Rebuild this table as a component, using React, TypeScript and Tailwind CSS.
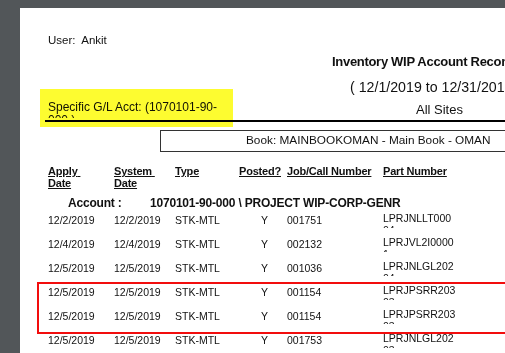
const rows = [
  { apply: "12/2/2019", system: "12/2/2019", job: "001751", part: "LPRJNLLT000", part2: "04" },
  { apply: "12/4/2019", system: "12/4/2019", job: "002132", part: "LPRJVL2I0000", part2: "1" },
  { apply: "12/5/2019", system: "12/5/2019", job: "001036", part: "LPRJNLGL202", part2: "04" },
  { apply: "12/5/2019", system: "12/5/2019", job: "001154", part: "LPRJPSRR203", part2: "03" },
  { apply: "12/5/2019", system: "12/5/2019", job: "001154", part: "LPRJPSRR203", part2: "03" },
  { apply: "12/5/2019", system: "12/5/2019", job: "001753", part: "LPRJNLGL202", part2: "03" },
];

const GRID = "grid grid-cols-[66px_61px_64px_48px_96px_auto] pl-[28px]";

export default function App() {
  return (
    <div className="relative h-[353px] w-[505px] overflow-hidden bg-[#525659] pl-[20px] pt-[8px] font-['Liberation_Sans',Arial,sans-serif] text-[#111]">
      <div className="h-[420px] w-[620px] bg-white">
        {/* User */}
        <div className="pl-[28px] pt-[25px] text-[11.5px] leading-[14px] whitespace-pre">User:  Ankit</div>

        {/* Report header */}
        <div className="ml-[25px] flex h-[73px]">
          <div className="flex w-[255px] flex-col justify-end pb-[2px] pl-[3px]">
            <div className="h-[17px] overflow-hidden text-[12px] leading-[13px] whitespace-nowrap">
              Specific G/L Acct: (1070101-90-
              <br />
              000 )
            </div>
          </div>
          <div className="flex flex-col whitespace-nowrap">
            <div className="ml-[32px] mt-[7px] text-[13px] font-bold leading-[16px] tracking-[-0.3px]">
              Inventory WIP Account Reconciliation
            </div>
            <div className="ml-[50px] mt-[9px] text-[14.2px] leading-[16px]">( 12/1/2019 to 12/31/2019 )</div>
            <div className="ml-[116px] mt-[7px] text-[13px] leading-[16px]">All Sites</div>
          </div>
        </div>
        <div className="ml-[25px] h-[1.5px] bg-black" />

        {/* Book box */}
        <div className="ml-[140px] mt-[8.5px] h-[22px] w-[470px] border-[1.5px] border-r-0 border-[#333] pl-[85px] text-[11.8px] leading-[19px] whitespace-nowrap">
          Book: MAINBOOKOMAN - Main Book - OMAN
        </div>

        {/* Column headers */}
        <div className={`${GRID} mt-[13px] text-[11px] font-bold leading-[12px] tracking-[-0.2px] whitespace-nowrap`}>
          <div>
            <span className="underline">Apply{"\u00a0"}</span>
            <br />
            <span className="underline">Date</span>
          </div>
          <div>
            <span className="underline">System{"\u00a0"}</span>
            <br />
            <span className="underline">Date</span>
          </div>
          <div><span className="underline">Type</span></div>
          <div><span className="underline">Posted?</span></div>
          <div><span className="underline">Job/Call Number</span></div>
          <div><span className="underline">Part Number</span></div>
        </div>

        {/* Account */}
        <div className="mt-[7px] flex pl-[48px] text-[12px] font-bold leading-[14px] tracking-[-0.2px] whitespace-nowrap">
          <span className="w-[82px]">Account :</span>
          <span>1070101-90-000 \ PROJECT WIP-CORP-GENR</span>
        </div>

        {/* Rows */}
        {rows.map((r, i) => (
          <div key={i} className={`${GRID} h-[24px] pt-[3px] text-[10.5px] leading-[14px] whitespace-nowrap`}>
            <div>{r.apply}</div>
            <div>{r.system}</div>
            <div>STK-MTL</div>
            <div className="pl-[22px]">Y</div>
            <div>{r.job}</div>
            <div className="-mt-[1px] h-[15.5px] overflow-hidden leading-[12px]">
              {r.part}
              <br />
              {r.part2}
            </div>
          </div>
        ))}
      </div>

      {/* Annotations */}
      <div className="absolute left-[40px] top-[89px] h-[38px] w-[193px] bg-[#fdfc30] mix-blend-multiply" />
      <div className="absolute left-[37px] top-[282px] h-[52px] w-[500px] border-2 border-[#f20d0d]" />
    </div>
  );
}
